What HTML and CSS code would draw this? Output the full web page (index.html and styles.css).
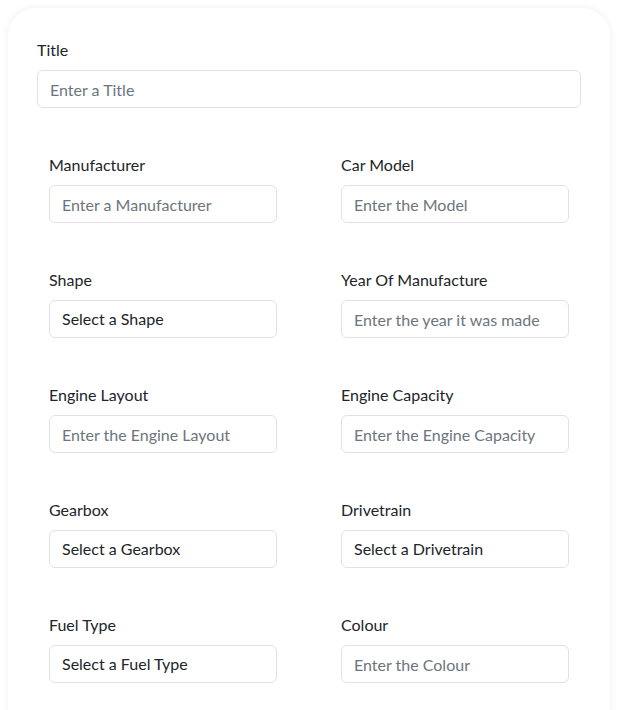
FILE: index.html
```html
<!DOCTYPE html>
<html lang="en">
<head>
<meta charset="utf-8">
<title>Car Form</title>
<link rel="stylesheet" href="styles.css">
</head>
<body>
<form class="card">
  <div class="field">
    <label class="label" for="title">Title</label>
    <input class="control" id="title" type="text" placeholder="Enter a Title">
  </div>
  <div class="grid">
    <div class="field">
      <label class="label" for="manufacturer">Manufacturer</label>
      <input class="control" id="manufacturer" type="text" placeholder="Enter a Manufacturer">
    </div>
    <div class="field">
      <label class="label" for="model">Car Model</label>
      <input class="control" id="model" type="text" placeholder="Enter the Model">
    </div>
    <div class="field">
      <label class="label" for="shape">Shape</label>
      <select class="control select" id="shape"><option>Select a Shape</option></select>
    </div>
    <div class="field">
      <label class="label" for="year">Year Of Manufacture</label>
      <input class="control" id="year" type="text" placeholder="Enter the year it was made">
    </div>
    <div class="field">
      <label class="label" for="layout">Engine Layout</label>
      <input class="control" id="layout" type="text" placeholder="Enter the Engine Layout">
    </div>
    <div class="field">
      <label class="label" for="capacity">Engine Capacity</label>
      <input class="control" id="capacity" type="text" placeholder="Enter the Engine Capacity">
    </div>
    <div class="field">
      <label class="label" for="gearbox">Gearbox</label>
      <select class="control select" id="gearbox"><option>Select a Gearbox</option></select>
    </div>
    <div class="field">
      <label class="label" for="drivetrain">Drivetrain</label>
      <select class="control select" id="drivetrain"><option>Select a Drivetrain</option></select>
    </div>
    <div class="field">
      <label class="label" for="fuel">Fuel Type</label>
      <select class="control select" id="fuel"><option>Select a Fuel Type</option></select>
    </div>
    <div class="field">
      <label class="label" for="colour">Colour</label>
      <input class="control" id="colour" type="text" placeholder="Enter the Colour">
    </div>
  </div>
</form>
</body>
</html>
```
FILE: styles.css
```css
* { box-sizing: border-box; }
html, body { margin: 0; background: #ffffff; }
body {
  padding: 8px 10px 0 8px;
  font-family: "Lato", "Open Sans", sans-serif;
  font-size: 16px;
  line-height: 24px;
  color: #212529;
  overflow: hidden;
}
.card {
  width: 602px;
  min-height: 760px;
  background: #ffffff;
  border-radius: 28px;
  box-shadow: 0 0 6px 2px rgba(0, 0, 0, 0.045);
  padding: 30px 29px 40px 29px;
}
.field {
  display: flex;
  flex-direction: column;
}
.label {
  display: block;
  margin-bottom: 8px;
  color: #212529;
}
.control {
  display: block;
  width: 100%;
  height: 38px;
  padding: 6px 12px;
  font: inherit;
  color: #212529;
  background: #ffffff;
  border: 1px solid #dee2e6;
  border-radius: 6px;
  outline: none;
}
.control::placeholder { color: #6c757d; opacity: 1; }
.select {
  appearance: none;
  -webkit-appearance: none;
}
.grid {
  display: grid;
  grid-template-columns: 228px 228px;
  column-gap: 64px;
  row-gap: 45px;
  margin-top: 45px;
  padding-left: 12px;
}
```
